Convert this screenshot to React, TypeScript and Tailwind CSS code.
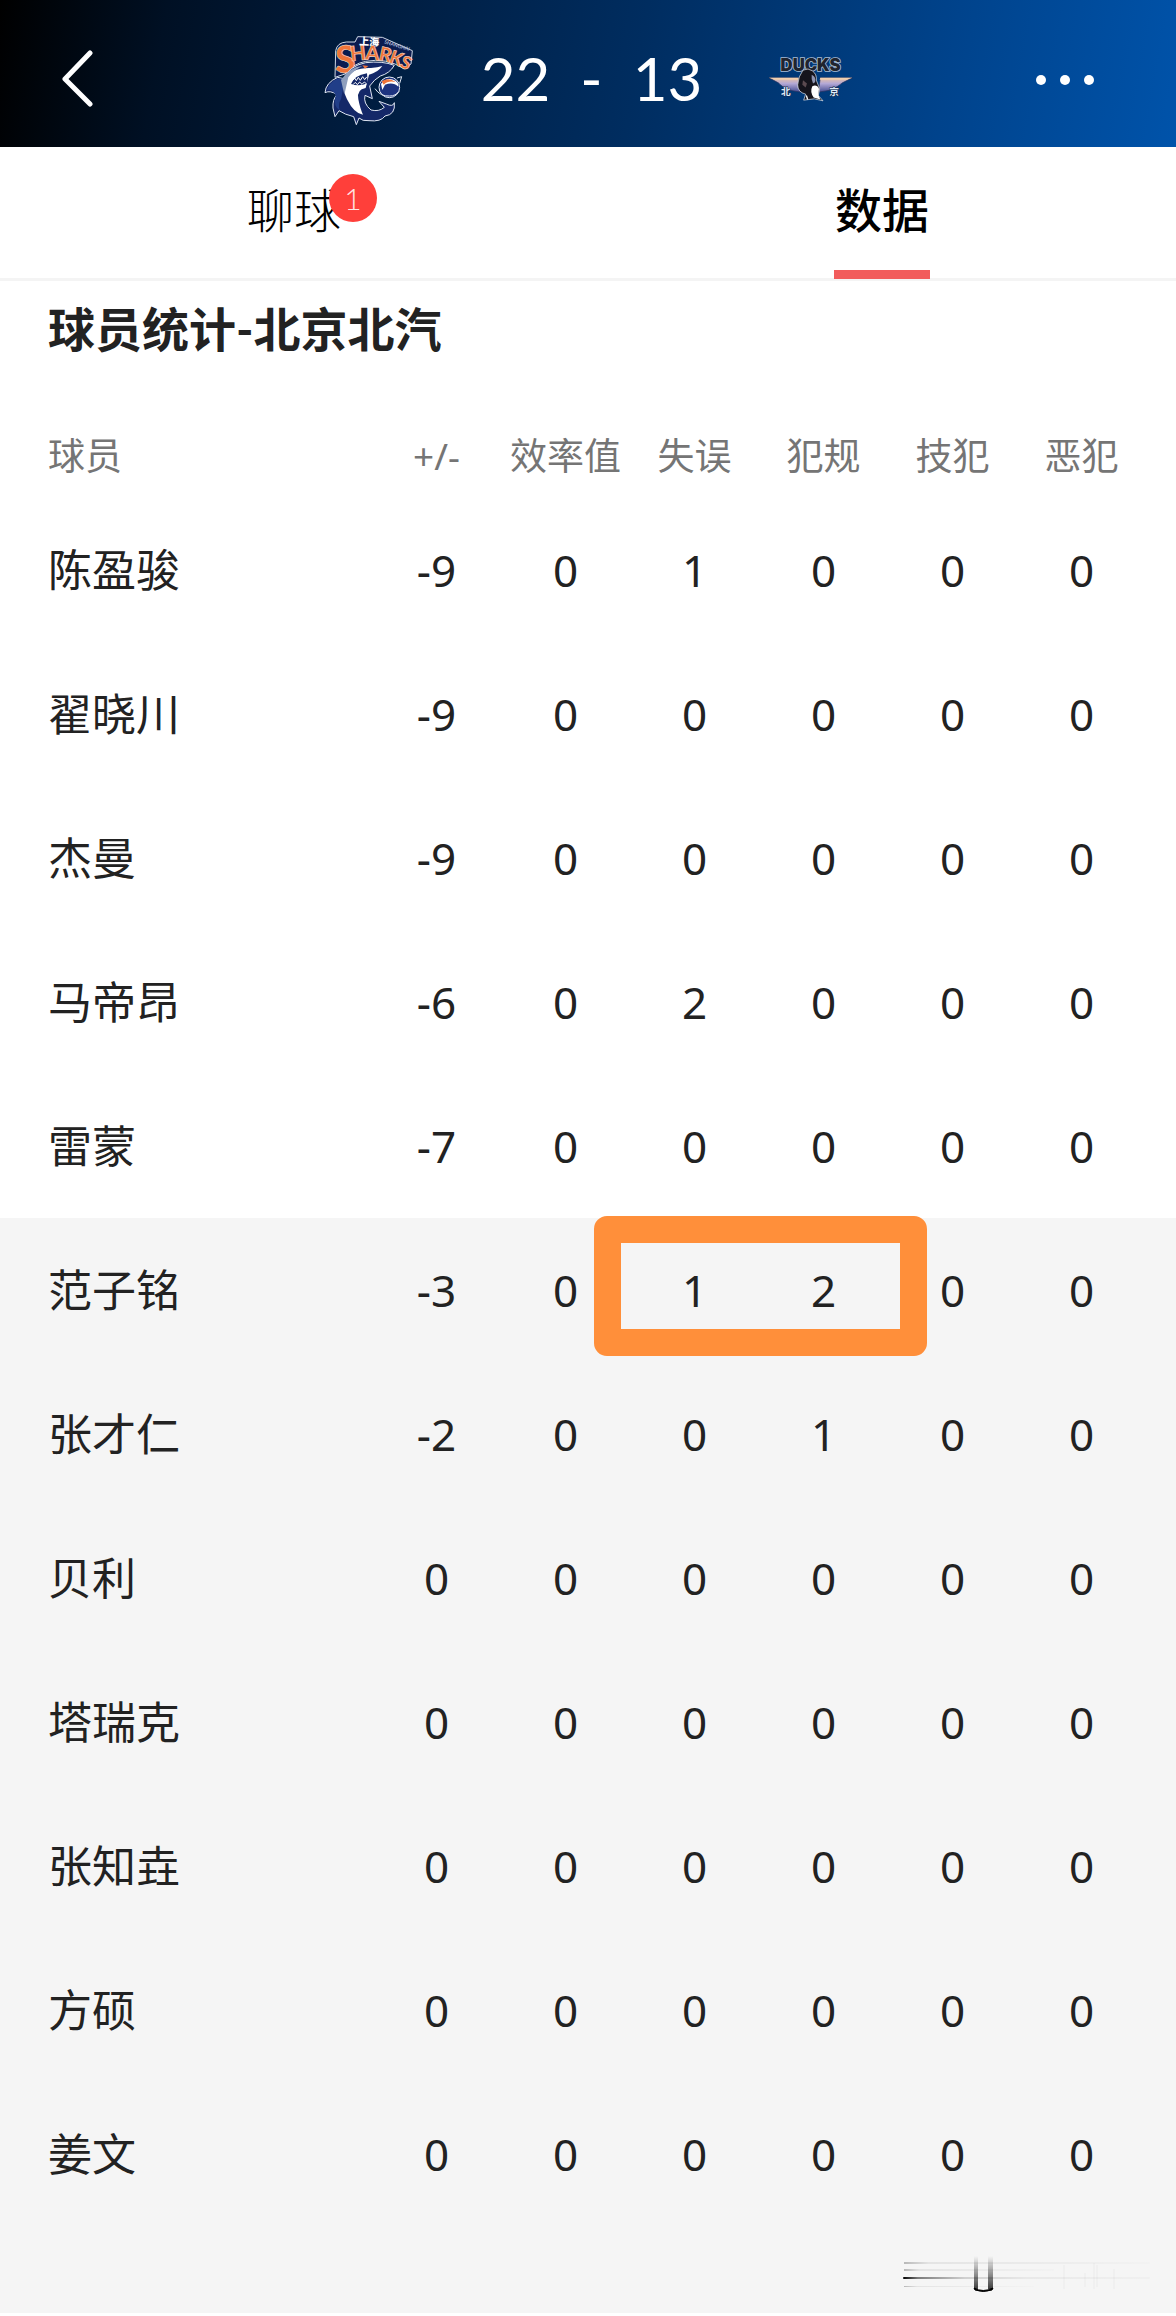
import { useState } from "react";

type Tab = "chat" | "stats";

type Player = {
  name: string;
  starter: boolean;
  stats: number[];
  marked?: boolean;
};

const columns = ["+/-", "效率值", "失误", "犯规", "技犯", "恶犯"];

const players: Player[] = [
  { name: "陈盈骏", starter: true, stats: [-9, 0, 1, 0, 0, 0] },
  { name: "翟晓川", starter: true, stats: [-9, 0, 0, 0, 0, 0] },
  { name: "杰曼", starter: true, stats: [-9, 0, 0, 0, 0, 0] },
  { name: "马帝昂", starter: true, stats: [-6, 0, 2, 0, 0, 0] },
  { name: "雷蒙", starter: true, stats: [-7, 0, 0, 0, 0, 0] },
  { name: "范子铭", starter: false, stats: [-3, 0, 1, 2, 0, 0], marked: true },
  { name: "张才仁", starter: false, stats: [-2, 0, 0, 1, 0, 0] },
  { name: "贝利", starter: false, stats: [0, 0, 0, 0, 0, 0] },
  { name: "塔瑞克", starter: false, stats: [0, 0, 0, 0, 0, 0] },
  { name: "张知垚", starter: false, stats: [0, 0, 0, 0, 0, 0] },
  { name: "方硕", starter: false, stats: [0, 0, 0, 0, 0, 0] },
  { name: "姜文", starter: false, stats: [0, 0, 0, 0, 0, 0] },
];

function SharksLogo() {
  return (
    <svg viewBox="62 42 276 276" className="h-[92px] w-[92px]" role="img" aria-label="Sharks">
      {/* wordmark plate */}
      <path
        d="M98 172 L100 92 Q104 68 132 66 L158 66 L166 50 L240 52 L330 92 L326 132 L306 146 Q250 112 190 124 Q150 132 128 162 Z"
        fill="#0b1c50"
        stroke="#cfd8e6"
        strokeWidth="3"
      />
      <g fontFamily="Lato, sans-serif" fontWeight="900" fill="#f0743a" stroke="#f7e4d8" strokeWidth="1.5">
        <text x="98" y="160" fontSize="112">S</text>
        <text x="145" y="124" fontSize="62" transform="rotate(-6 145 124)">H</text>
        <text x="188" y="119" fontSize="60" transform="rotate(3 188 119)">A</text>
        <text x="227" y="120" fontSize="58" transform="rotate(12 227 120)">R</text>
        <text x="257" y="127" fontSize="56" transform="rotate(20 257 127)">K</text>
        <text x="289" y="139" fontSize="54" transform="rotate(26 289 139)">S</text>
      </g>
      <text
        x="170"
        y="74"
        fontSize="30"
        fontWeight="900"
        fontFamily="'Noto Sans CJK SC', sans-serif"
        fill="#fff"
        transform="rotate(3 170 74)"
      >
        上海
      </text>
      <text
        x="245"
        y="70"
        fontSize="15"
        fontWeight="700"
        fontFamily="Lato, sans-serif"
        fill="#aebbd8"
        transform="rotate(17 245 70)"
      >
        SHANGHAI
      </text>

      {/* shark body */}
      <path
        d="M125 176 Q140 138 190 128 Q240 122 276 136 Q262 160 234 168 Q216 178 202 198 L210 236 L188 226 Q182 250 206 270 Q230 276 246 262 L230 244 L252 252 Q272 262 276 248 Q280 284 248 288 Q236 306 200 302 Q180 304 170 294 L162 314 L154 290 Q128 284 110 272 L98 290 L92 264 Q90 238 104 224 Q84 210 68 218 Q70 188 106 172 Z"
        fill="#142868"
        stroke="#dfe6f2"
        strokeWidth="3"
        strokeLinejoin="round"
      />
      <path
        d="M126 178 Q150 142 206 144 Q226 142 240 138 Q226 158 200 164 L190 204 Q162 208 168 238 Q174 268 182 284 Q156 282 134 238 Q120 210 126 178 Z"
        fill="#fff"
      />
      <path d="M146 192 Q156 166 194 160 L196 190 Q170 200 146 192 Z" fill="#142868" />
      <path
        d="M150 182 l7 -8 5 8 6 -10 6 9 7 -11 6 9 6 -8 M152 194 l7 -7 6 7 7 -8 7 7 7 -7 7 6"
        fill="none"
        stroke="#fff"
        strokeWidth="3"
      />
      <path d="M104 176 L128 176 L116 238 Q106 252 112 270 Q92 262 100 226 Q90 206 74 210 Q80 188 104 176 Z" fill="#213e88" />
      <path d="M116 180 Q140 142 180 138 Q150 154 138 172 L126 224 Z" fill="#8f9fbd" />
      <path d="M180 136 l18 2 -10 8 z" fill="#f0743a" />

      {/* ball */}
      <circle cx="261" cy="202" r="31" fill="#1d3380" stroke="#e6ecf6" strokeWidth="3" />
      <path d="M236 192 Q254 168 280 182 Q290 190 288 200 Q272 184 248 194 L240 210 Z" fill="#fff" />
      <path d="M238 184 Q258 170 280 186 Q258 180 244 194 Z" fill="#f0743a" />
      <path d="M218 206 Q234 230 262 228 Q280 228 290 214 M284 174 L298 170 L292 190" fill="none" stroke="#dfe6f2" strokeWidth="3" />
    </svg>
  );
}

function DucksLogo() {
  return (
    <svg viewBox="45 52 255 140" className="h-[47px] w-[85px]" role="img" aria-label="Ducks">
      <defs>
        <linearGradient id="wing" x1="0" y1="0" x2="0" y2="1">
          <stop offset="0" stopColor="#e9c2a4" />
          <stop offset="0.4" stopColor="#b3a8d6" />
          <stop offset="1" stopColor="#454c92" />
        </linearGradient>
      </defs>
      <path d="M48 117 L136 117 L144 160 L108 154 Q84 142 76 132 Z" fill="url(#wing)" stroke="#26305c" strokeWidth="2" />
      <path d="M298 117 L202 117 L196 160 L232 154 Q258 142 268 132 Z" fill="url(#wing)" stroke="#26305c" strokeWidth="2" />
      <path d="M48 117 L136 117 L138 123 L66 123 Z M298 117 L202 117 L200 123 L280 123 Z" fill="#f0cfae" />
      <text
        x="173"
        y="98"
        textAnchor="middle"
        fontSize="50"
        fontWeight="900"
        fontFamily="Inter, sans-serif"
        fill="#20242e"
        stroke="#a9bdd4"
        strokeWidth="5"
        paintOrder="stroke"
      >
        DUCKS
      </text>
      <g fontFamily="'Noto Sans CJK SC', sans-serif" fontSize="29" fontWeight="700" fill="#dfeaf6" stroke="#1a2a50" strokeWidth="3" paintOrder="stroke">
        <text x="84" y="168">北</text>
        <text x="229" y="168">京</text>
      </g>
      <path
        d="M150 94 Q166 86 178 96 Q192 106 190 124 L200 150 L196 170 L210 186 L184 180 L152 184 L158 166 Q134 160 134 138 Q136 112 150 94 Z"
        fill="#15141c"
        stroke="#e8eef6"
        strokeWidth="2"
      />
      <path d="M176 108 Q190 114 186 130 L180 134 Q174 120 176 108 Z" fill="#8e94b0" />
      <path d="M178 142 Q192 136 198 150 L196 168 L202 182 L182 176 Q170 158 178 142 Z" fill="#fff" />
      <path d="M150 124 l12 10 -4 12 -10 -8 z" fill="#5b4a50" />
      <path d="M160 170 L164 182" stroke="#fff" strokeWidth="4" />
    </svg>
  );
}

function Watermark() {
  return (
    <svg viewBox="0 0 250 42" className="h-[42px] w-[250px]" aria-hidden="true">
      <defs>
        <linearGradient id="streak" x1="0" y1="0" x2="1" y2="0">
          <stop offset="0" stopColor="#000" />
          <stop offset="0.06" stopColor="#000" stopOpacity="0.5" />
          <stop offset="0.25" stopColor="#000" stopOpacity="0.15" />
          <stop offset="0.5" stopColor="#000" stopOpacity="0.05" />
          <stop offset="1" stopColor="#000" stopOpacity="0.02" />
        </linearGradient>
        <linearGradient id="faint" x1="0" y1="0" x2="1" y2="0">
          <stop offset="0" stopColor="#000" stopOpacity="0.25" />
          <stop offset="0.1" stopColor="#000" stopOpacity="0.07" />
          <stop offset="1" stopColor="#000" stopOpacity="0.01" />
        </linearGradient>
        <linearGradient id="drip" x1="0" y1="0" x2="0" y2="1">
          <stop offset="0" stopColor="#000" stopOpacity="0" />
          <stop offset="1" stopColor="#000" stopOpacity="0.75" />
        </linearGradient>
      </defs>
      <rect x="1" y="24" width="247" height="2" rx="1" fill="url(#streak)" />
      <g fill="url(#faint)">
        <rect x="2" y="9" width="246" height="2" />
        <rect x="2" y="16" width="150" height="2" />
        <rect x="2" y="33" width="130" height="1" />
      </g>
      <rect x="72" y="3" width="4" height="33" fill="url(#drip)" />
      <rect x="86" y="3" width="5" height="33" fill="url(#drip)" />
      <path d="M72 35 Q81 40 91 35 L90 37 Q81 40 73 37 Z" fill="#000" stroke="#000" />
      <path d="M162 12v24M183 20v14M192 10v26M195 12v22M212 16v20" stroke="#000" strokeOpacity="0.04" />
    </svg>
  );
}

function Header() {
  return (
    <header className="flex h-[147px] items-center justify-between bg-[linear-gradient(100deg,#000000_0%,#001024_14%,#001d40_32%,#002d60_54%,#00438c_80%,#0053aa_100%)] px-[60px] text-white">
      <button aria-label="返回" className="flex w-20 justify-start pt-3">
        <svg viewBox="0 0 34 60" className="h-[60px] w-[34px]" fill="none" stroke="currentColor" strokeWidth="5" strokeLinecap="round" strokeLinejoin="round">
          <path d="M30 3 L5 29 L30 54" />
        </svg>
      </button>

      <div className="flex items-center gap-[66px] pt-3">
        <SharksLogo />
        <div className="flex items-center gap-[30px] pb-1 text-[60px] leading-[64px]">
          <span>22</span>
          <span>-</span>
          <span>13</span>
        </div>
        <DucksLogo />
      </div>

      <button aria-label="更多" className="flex w-20 justify-start gap-3.5 pt-3">
        <span className="h-2.5 w-2.5 rounded-full bg-white" />
        <span className="h-2.5 w-2.5 rounded-full bg-white" />
        <span className="h-2.5 w-2.5 rounded-full bg-white" />
      </button>
    </header>
  );
}

export default function App() {
  const [tab, setTab] = useState<Tab>("stats");

  return (
    <div className="min-h-screen bg-white font-['Lato','Noto_Sans_CJK_SC',sans-serif] text-[#222222]">
      <Header />

      <nav className="flex h-[134px] border-b-3 border-[#f4f4f4] text-[47px] leading-[48px] text-black">
        <button onClick={() => setTab("chat")} className="relative flex flex-1 items-center justify-center pb-1.5 font-light">
          <span className="relative">
            聊球
            <span className="absolute -top-3 left-[82px] flex h-12 w-12 items-center justify-center rounded-full bg-[#ff3f3a] text-[30px] text-[#ffe4e2]">
              1
            </span>
          </span>
          {tab === "chat" && <span className="absolute -bottom-px h-[9px] w-24 bg-[#f25c5c]" />}
        </button>
        <button onClick={() => setTab("stats")} className="relative flex flex-1 items-center justify-center pb-1.5 font-medium">
          数据
          {tab === "stats" && <span className="absolute -bottom-px h-[9px] w-24 bg-[#f25c5c]" />}
        </button>
      </nav>

      <main>
        <h1 className="px-12 pb-16 pt-6 text-[47px] font-bold leading-[48px]">球员统计-北京北汽</h1>

        <table className="w-full table-fixed border-collapse font-['Noto_Sans','Noto_Sans_CJK_SC',sans-serif]">
          <colgroup>
            <col />
            <col className="w-[129px]" span={6} />
            <col className="w-[30px]" />
          </colgroup>
          <thead>
            <tr className="h-[81px] text-[37px] leading-[48px] text-[#757575]">
              <th scope="col" className="pb-1 pl-12 text-left font-normal">
                球员
              </th>
              {columns.map((label) => (
                <th key={label} scope="col" className="whitespace-nowrap px-0 pb-1 text-center font-normal">
                  {label}
                </th>
              ))}
              <td />
            </tr>
          </thead>
          <tbody className="text-[44px] leading-[48px]">
            {players.map((player) => (
              <tr key={player.name} className={player.starter ? "h-36" : "h-36 bg-[#f5f5f5]"}>
                <th scope="row" className="pl-12 text-left font-normal">
                  {player.name}
                </th>
                {player.stats.map((value, i) => (
                  <td key={columns[i]} className="relative p-0 text-center">
                    {value}
                    {player.marked && columns[i] === "失误" && (
                      <span className="pointer-events-none absolute -left-9 -top-0.5 z-10 h-[140px] w-[258%] rounded-[13px] border-[27px] border-[#ff8f3a]" />
                    )}
                  </td>
                ))}
                <td />
              </tr>
            ))}
          </tbody>
        </table>

        <div className="flex h-[87px] justify-end bg-[#f5f5f5] pr-6 pt-[27px]">
          <Watermark />
        </div>
      </main>
    </div>
  );
}
